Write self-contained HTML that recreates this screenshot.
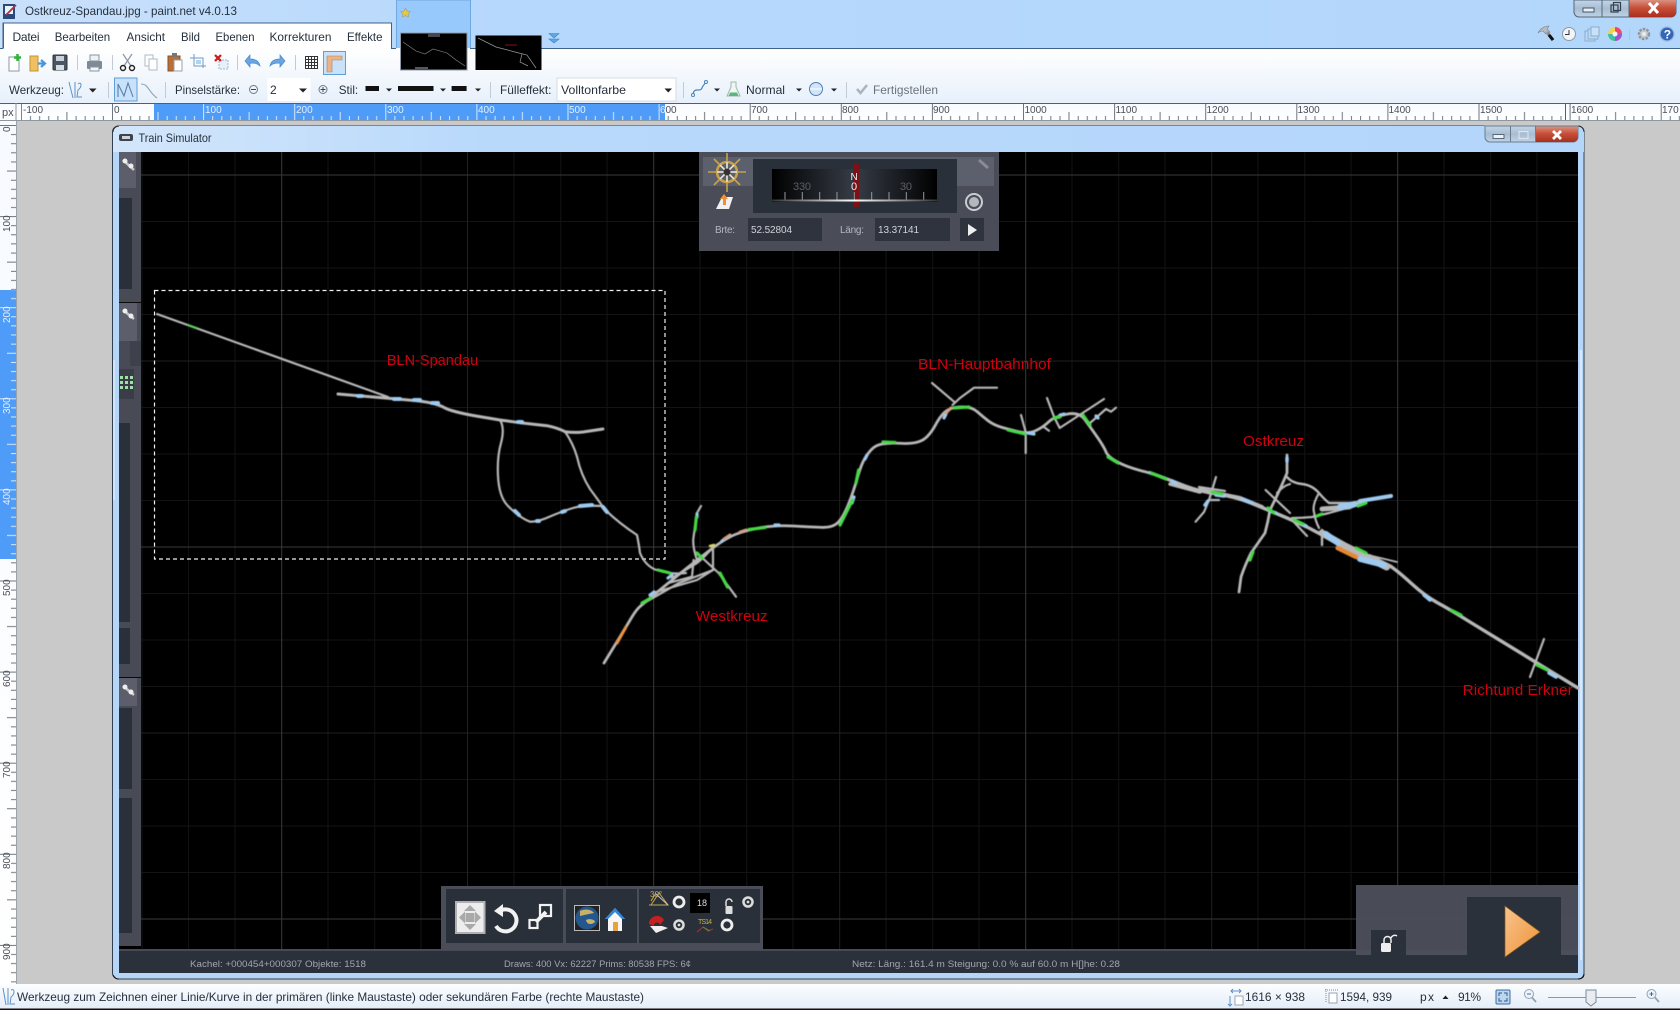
<!DOCTYPE html>
<html><head><meta charset="utf-8"><title>paint.net</title>
<style>
html,body{margin:0;padding:0;background:#c9c9c9;overflow:hidden}
svg{display:block;font-family:"Liberation Sans",Arial,sans-serif}
.t{font-size:12px;fill:#26303c}
.r{font-size:10px;fill:#4a4f57}
.w{font-size:10px;fill:#e4f0ff}
.g{font-size:9px;fill:#a2a5ac}
.lab{font-size:15px;fill:#d0000f}
</style></head><body>
<svg xmlns="http://www.w3.org/2000/svg" width="1680" height="1010" viewBox="0 0 1680 1010">
<defs>
<linearGradient id="sky" x1="0" x2="1" y1="0" y2="0"><stop offset="0" stop-color="#c9e0fb"/><stop offset=".3" stop-color="#b6d8fc"/><stop offset="1" stop-color="#b3d6fb"/></linearGradient>
<linearGradient id="tb" x1="0" x2="0" y1="0" y2="1"><stop offset="0" stop-color="#ffffff"/><stop offset="1" stop-color="#e7f0fb"/></linearGradient>
<linearGradient id="rul" x1="0" x2="0" y1="0" y2="1"><stop offset="0" stop-color="#f7faff"/><stop offset="1" stop-color="#ffffff"/></linearGradient>
<linearGradient id="wt" x1="0" x2="1" y1="0" y2="0"><stop offset="0" stop-color="#d3e6fb"/><stop offset=".25" stop-color="#b9d9fb"/><stop offset="1" stop-color="#b4d6fb"/></linearGradient>
<linearGradient id="red" x1="0" x2="0" y1="0" y2="1"><stop offset="0" stop-color="#d99080"/><stop offset=".45" stop-color="#c8503a"/><stop offset="1" stop-color="#a92e1e"/></linearGradient>
<linearGradient id="gb" x1="0" x2="0" y1="0" y2="1"><stop offset="0" stop-color="#c3d5e8"/><stop offset=".5" stop-color="#a9bdd2"/><stop offset="1" stop-color="#bfd2e6"/></linearGradient>
<linearGradient id="comp" x1="0" x2="1" y1="0" y2="0"><stop offset="0" stop-color="#000"/><stop offset=".5" stop-color="#363c46"/><stop offset="1" stop-color="#000"/></linearGradient>
<linearGradient id="glow" x1="0" x2="1" y1="0" y2="0"><stop offset="0" stop-color="#333"/><stop offset=".5" stop-color="#fff"/><stop offset="1" stop-color="#333"/></linearGradient>
<linearGradient id="tri" x1="0" x2="1" y1="0" y2="1"><stop offset="0" stop-color="#f8c48c"/><stop offset="1" stop-color="#ee9238"/></linearGradient>
<linearGradient id="st" x1="0" x2="0" y1="0" y2="1"><stop offset="0" stop-color="#fdfeff"/><stop offset="1" stop-color="#e4edf8"/></linearGradient>
<linearGradient id="hand" x1="0" x2="1" y1="0" y2="1"><stop offset="0" stop-color="#bbb"/><stop offset="1" stop-color="#111"/></linearGradient>
<pattern id="hr" patternUnits="userSpaceOnUse" x="112" y="103" width="91.1" height="17">
<path d="M.5 0V17M9.6 13V17M18.7 13V17M27.8 13V17M37 13V17M46 9V17M55.2 13V17M64.3 13V17M73.4 13V17M82.5 13V17" stroke="#6d7680" stroke-width="1" fill="none"/></pattern>
<pattern id="hw" patternUnits="userSpaceOnUse" x="112" y="103" width="91.1" height="17">
<path d="M.5 0V17M9.6 13V17M18.7 13V17M27.8 13V17M37 13V17M46 9V17M55.2 13V17M64.3 13V17M73.4 13V17M82.5 13V17" stroke="#d6e8ff" stroke-width="1" fill="none"/></pattern>
<pattern id="vr" patternUnits="userSpaceOnUse" x="0" y="125" width="17" height="91.1">
<path d="M0 .5H17M11 9.6H16M11 18.7H16M11 27.8H16M11 37H16M7 46H16M11 55.2H16M11 64.3H16M11 73.4H16M11 82.5H16" stroke="#6d7680" stroke-width="1" fill="none"/></pattern>
<pattern id="vw" patternUnits="userSpaceOnUse" x="0" y="125" width="17" height="91.1">
<path d="M0 .5H17M11 9.6H16M11 18.7H16M11 27.8H16M11 37H16M7 46H16M11 55.2H16M11 64.3H16M11 73.4H16M11 82.5H16" stroke="#d6e8ff" stroke-width="1" fill="none"/></pattern>
<filter id="soft" x="-2%" y="-2%" width="104%" height="104%"><feGaussianBlur stdDeviation=".5"/></filter>
<filter id="soft2"><feGaussianBlur stdDeviation=".3"/></filter>
</defs>

<rect width="1680" height="1010" fill="#c9c9c9"/>
<rect width="1680" height="48" fill="url(#sky)"/>
<rect x="3" y="4" width="12" height="15" fill="#2a4a7a"/><rect x="5" y="6" width="8" height="8" fill="#eef2f8"/><path d="M6 15L16 5" stroke="#b03040" stroke-width="1.800"/>
<text class="t" x="25" y="15" textLength="212" lengthAdjust="spacingAndGlyphs">Ostkreuz-Spandau.jpg - paint.net v4.0.13</text>

<path d="M1574 0H1676V12a5 5 0 0 1-5 5H1579a5 5 0 0 1-5-5Z" fill="url(#gb)" stroke="#56677c"/>
<path d="M1629 0H1676V12a5 5 0 0 1-5 5H1629Z" fill="url(#red)"/>
<path d="M1602 0V17M1629 0V17" stroke="#56677c"/>
<rect x="1583" y="8" width="11" height="4" fill="#e8eef5" stroke="#44566c"/>
<rect x="1611" y="5" width="7" height="7" fill="none" stroke="#33404f" stroke-width="1.200"/><rect x="1613.500" y="2.500" width="7" height="8" fill="none" stroke="#33404f" stroke-width="1.200"/>
<path d="M1649 3L1658 13M1658 3L1649 13" stroke="#fff" stroke-width="3"/>

<rect x="396.500" y="0" width="74" height="74" fill="#98c9fc" stroke="#6ea8e2"/>
<path d="M405.500 8L407 11L410.500 11.500L408 14L408.500 17L405.500 15.500L402.500 17L403 14L400.500 11.500L404 11Z" fill="#e3c84a" stroke="#a8903a" stroke-width=".5"/>

<rect x="0" y="48" width="1680" height="55" fill="url(#tb)"/>
<path d="M0 48.500H3V23H391.500V48.500H396M470 48.500H1680" stroke="#3f6288" fill="none"/>
<rect x="3.500" y="23.500" width="387.500" height="25" fill="#fff"/>
<path d="M3.500 48V23H391.500V48" stroke="#3f6288" fill="none"/>
<rect x="400.500" y="33" width="66.500" height="37" fill="#000" stroke="#8f9aa8"/>
<rect x="475.500" y="35.500" width="66" height="34.500" fill="#000"/>
<rect x="428" y="34" width="12" height="3" fill="#44464e"/>
<path d="M403 42L416 51L425 54L433 49L447 53L456 60L465 66" stroke="#8c8c8c" fill="none" stroke-width=".6"/>
<rect x="415" y="67" width="13" height="2" fill="#55575f"/>
<path d="M478 38L496 47L515 52L527 55L536 68M522 54L520 62L528 66" stroke="#999" fill="none" stroke-width=".7"/>
<path d="M505 45h12" stroke="#8a1020" stroke-width="1"/>
<path d="M549 33.500H559L554 38ZM549 39H559L554 43Z" fill="#5ba8ea" stroke="#3c80c0" stroke-width=".6"/>

<text class="t" x="12.500" y="41" textLength="27">Datei</text>
<text class="t" x="54.700" y="41" textLength="55.500" lengthAdjust="spacingAndGlyphs">Bearbeiten</text>
<text class="t" x="126.500" y="41" textLength="38.500" lengthAdjust="spacingAndGlyphs">Ansicht</text>
<text class="t" x="181" y="41" textLength="19" lengthAdjust="spacingAndGlyphs">Bild</text>
<text class="t" x="215.500" y="41" textLength="39" lengthAdjust="spacingAndGlyphs">Ebenen</text>
<text class="t" x="269.500" y="41" textLength="62" lengthAdjust="spacingAndGlyphs">Korrekturen</text>
<text class="t" x="347" y="41" textLength="35.500" lengthAdjust="spacingAndGlyphs">Effekte</text>

<path d="M9 57H19V71H9Z" fill="#fff" stroke="#8b98a8"/><path d="M17.500 54V61M14 57.500H21" stroke="#35b040" stroke-width="2.500"/>
<path d="M30 56H38V71H30Z" fill="#f0c060" stroke="#c49430"/><path d="M38 63.500H45M41 60L45 63.500L41 67" stroke="#4f94d8" stroke-width="2.200" fill="none"/>
<rect x="53" y="55" width="14" height="15" rx="1" fill="#4b5560" stroke="#2d343c"/><rect x="56" y="56" width="8" height="5" fill="#c9d2dc"/><rect x="56" y="65" width="8" height="5" fill="#d5dce4"/>
<path d="M77.500 55V70M112.500 55V70M237.500 55V70M295.500 55V70" stroke="#c3cad4"/>
<rect x="87" y="61" width="15" height="8" rx="1" fill="#7f8a96"/><rect x="90" y="55" width="9" height="6" fill="#eef1f5" stroke="#8a94a0"/><rect x="90" y="67" width="9" height="4" fill="#f3f5f8" stroke="#8a94a0"/>
<path d="M123 54L131 66M132 54L124 66" stroke="#8b96a2" stroke-width="1.200"/><circle cx="123" cy="68" r="2.500" fill="none" stroke="#222" stroke-width="1.400"/><circle cx="132" cy="68" r="2.500" fill="none" stroke="#222" stroke-width="1.400"/>
<rect x="145" y="55" width="8" height="11" fill="#fff" stroke="#b0bac6"/><rect x="149" y="59" width="8" height="11" fill="#fff" stroke="#b0bac6"/>
<rect x="168" y="56" width="12" height="15" fill="#b96f36" stroke="#8e5021"/><rect x="172" y="53" width="5" height="4" fill="#777"/><rect x="174" y="60" width="8" height="11" fill="#fff" stroke="#98a2ae"/>
<path d="M190 58H203V68M194 54V66H206" stroke="#6c9cc8" fill="none"/><rect x="196" y="60" width="5" height="4" fill="#b4d2ea"/>
<rect x="219" y="60" width="9" height="9" fill="#e6f0fa" stroke="#9cb6d0" stroke-dasharray="2 1"/><path d="M215 55L221 61M221 55L215 61" stroke="#d01818" stroke-width="2.200"/>
<path d="M260 66C259 60 254 59 250 59V55L245 61L250 67V63C254 63 257 63 260 66Z" fill="#6aa6e4" stroke="#4a88c6" stroke-width=".7"/>
<path d="M270 66C271 60 276 59 280 59V55L285 61L280 67V63C276 63 273 63 270 66Z" fill="#6aa6e4" stroke="#4a88c6" stroke-width=".7"/>
<path d="M305.500 56.500H317.500V68.500H305.500ZM305.500 59.500H317.500M305.500 62.500H317.500M305.500 65.500H317.500M308.500 56.500V68.500M311.500 56.500V68.500M314.500 56.500V68.500" fill="none" stroke="#333"/>
<rect x="323.500" y="51.500" width="22" height="23" fill="#c9e2fb" stroke="#5f9fd8"/>
<path d="M327 56H342V60H332V72H327Z" fill="#eab488" stroke="#b88050" stroke-width=".6"/>

<text class="t" x="9" y="94" textLength="55" lengthAdjust="spacingAndGlyphs">Werkzeug:</text>
<path d="M69 82L73 98M75 98V82M78 84C82 81 82 87 78 90L77 97H82" stroke="#5d93c8" fill="none" stroke-width="1"/>
<path d="M89 88.500H96.500L92.750 92.500Z" fill="#222"/>
<path d="M108.500 82V98M165.500 82V98M490.500 82V98M683.500 82V98M846.500 82V98" stroke="#c3cad4"/>
<rect x="114.500" y="78" width="22.500" height="23" fill="#c9e2fb" stroke="#5f9fd8"/>
<path d="M118 97V84L124 96L128 83L133 97" fill="none" stroke="#5a7fa8" stroke-width="1.100"/>
<path d="M141 84C149 84 148 92 157 98" fill="none" stroke="#8ea4ba" stroke-width="1.100"/>
<text class="t" x="175" y="94" textLength="65" lengthAdjust="spacingAndGlyphs">Pinselstärke:</text>
<circle cx="253.500" cy="89.500" r="4" fill="none" stroke="#6d7a88"/><path d="M251 89.500H256" stroke="#444"/>
<rect x="267.500" y="78" width="43" height="23" fill="#fff"/>
<text class="t" x="270" y="94">2</text>
<path d="M299 88.500H307L303 92.500Z" fill="#222"/>
<circle cx="323" cy="89.500" r="4" fill="none" stroke="#6d7a88"/><path d="M320.500 89.500H325.500M323 87V92" stroke="#444"/>
<text class="t" x="338.700" y="94" textLength="19.500" lengthAdjust="spacingAndGlyphs">Stil:</text>
<rect x="365.500" y="86" width="13.500" height="5" fill="#111"/><path d="M386 88.500H392L389 91.500Z" fill="#222"/>
<rect x="398" y="86" width="35.500" height="5" fill="#111"/><path d="M440 88.500H446L443 91.500Z" fill="#222"/>
<rect x="451.600" y="86" width="15" height="5" fill="#111"/><path d="M475 88.500H481L478 91.500Z" fill="#222"/>
<text class="t" x="500" y="94" textLength="51.500" lengthAdjust="spacingAndGlyphs">Fülleffekt:</text>
<rect x="557" y="78" width="119" height="23" fill="#fff" stroke="#d5dbe3"/>
<text class="t" x="561" y="94" textLength="65" lengthAdjust="spacingAndGlyphs">Volltonfarbe</text>
<path d="M664.500 88.500H672L668.250 92.500Z" fill="#222"/>
<path d="M693 95C694 86 700 93 702 88C703 85 705 84 706 82" fill="none" stroke="#4a83b8" stroke-width="1.200"/><circle cx="693" cy="95" r="1.500" fill="#fff" stroke="#4a83b8"/><circle cx="706" cy="82" r="1.500" fill="#fff" stroke="#4a83b8"/>
<path d="M714 88.500H720L717 91.500Z" fill="#222"/>
<path d="M731 82H736V87L740 96H727L731 87Z" fill="#f0f6f2" stroke="#a0b8aa"/><path d="M730 92.500H737L738.500 96H728.500Z" fill="#58b880"/>
<text class="t" x="746" y="94" textLength="39" lengthAdjust="spacingAndGlyphs">Normal</text>
<path d="M796 88.500H802L799 91.500Z" fill="#222"/>
<circle cx="816" cy="89" r="6.500" fill="#d3e4f6" stroke="#4a83b8"/><path d="M810 89h12" stroke="#fff"/>
<path d="M831 88.500H837L834 91.500Z" fill="#222"/>
<path d="M857 89L860.500 93L867 85" fill="none" stroke="#aeb3ba" stroke-width="2.500"/>
<text class="t" x="873" y="94" textLength="65" lengthAdjust="spacingAndGlyphs" style="fill:#6b727a">Fertigstellen</text>

<!-- top right tool icons -->
<path d="M1538 33C1540 29 1544 26 1549 26L1547 29L1550 32L1546 34L1543 31C1541 31 1539 32 1538 33Z" fill="#b6bcc4" stroke="#7a828c" stroke-width=".6"/><path d="M1546 31L1553 40" stroke="url(#hand)" stroke-width="3"/><path d="M1549 35L1553 40" stroke="#111" stroke-width="3"/>
<circle cx="1569" cy="34" r="6.500" fill="#f1f5f9" stroke="#8e9aa6"/><path d="M1569 30V34.500H1565" fill="none" stroke="#333"/>
<rect x="1585" y="31" width="10" height="10" fill="#bcd8f2" stroke="#88aed0"/><rect x="1588" y="29" width="10" height="10" fill="#bcd8f2" stroke="#88aed0"/><rect x="1591" y="27" width="8" height="9" fill="#c9e0f5" stroke="#88aed0"/>
<circle cx="1615" cy="34" r="7" fill="#f5d050"/><path d="M1615 27A7 7 0 0 1 1622 34H1615Z" fill="#e84a6a"/><path d="M1622 34A7 7 0 0 1 1615 41V34Z" fill="#a050d0"/><path d="M1615 41A7 7 0 0 1 1608 34H1615Z" fill="#40c0a0"/><circle cx="1615" cy="34" r="2.500" fill="#f2f2f2"/>
<path d="M1629.500 29V40" stroke="#b5c6d8"/>
<circle cx="1644" cy="34" r="5" fill="#c4c9ce" stroke="#8f96a0" stroke-width="2.500" stroke-dasharray="2.500 1.200"/><circle cx="1644" cy="34" r="2" fill="#e8ebee"/>
<circle cx="1667" cy="34" r="7" fill="#3366b8" stroke="#9bb8de" stroke-width="1.200"/><text x="1663.800" y="38.500" style="font-size:12px;font-weight:bold;fill:#fff">?</text>

<!-- horizontal ruler -->
<rect x="0" y="103" width="1680" height="17" fill="url(#rul)"/>
<rect x="21" y="103" width="1659" height="17" fill="url(#hr)"/>
<rect x="154" y="104" width="511" height="16" fill="#4e9cf8"/>
<rect x="155" y="104" width="510" height="16" fill="url(#hw)"/>
<path d="M0 103.500H1680" stroke="#3f6288"/><path d="M0 120.500H1680" stroke="#8f97a0"/>
<path d="M16 103V120" stroke="#8f97a0"/>
<text class="r" x="2" y="116" style="font-size:11px">px</text>
<text class="r" x="23" y="113">-100</text><text class="r" x="114" y="113">0</text>
<text class="w" x="205" y="113">100</text><text class="w" x="296" y="113">200</text><text class="w" x="387" y="113">300</text><text class="w" x="478" y="113">400</text><text class="w" x="569" y="113">500</text>
<text class="w" x="660" y="113">6</text><text class="r" x="665.500" y="113">00</text>
<text class="r" x="751" y="113">700</text><text class="r" x="842" y="113">800</text><text class="r" x="933" y="113">900</text><text class="r" x="1024.500" y="113">1000</text><text class="r" x="1115.500" y="113">1100</text><text class="r" x="1206.500" y="113">1200</text><text class="r" x="1297.500" y="113">1300</text><text class="r" x="1388.500" y="113">1400</text><text class="r" x="1480" y="113">1500</text><text class="r" x="1571" y="113">1600</text><text class="r" x="1662" y="113">170</text>
<path d="M1565.500 104V120" stroke="#3f6288"/>

<!-- vertical ruler -->
<rect x="0" y="121" width="16" height="863" fill="url(#rul)"/>
<rect x="0" y="121" width="16" height="863" fill="url(#vr)"/>
<rect x="0" y="290" width="16" height="269" fill="#4e9cf8"/>
<rect x="0" y="290" width="16" height="269" fill="url(#vw)"/>
<path d="M16.500 121V984" stroke="#9aa2ab"/>
<text class="r" transform="translate(10,132) rotate(-90)">0</text>
<text class="r" transform="translate(10,232) rotate(-90)">100</text>
<text class="w" transform="translate(10,323) rotate(-90)">200</text>
<text class="w" transform="translate(10,414) rotate(-90)">300</text>
<text class="w" transform="translate(10,505) rotate(-90)">400</text>
<text class="r" transform="translate(10,596) rotate(-90)">500</text>
<text class="r" transform="translate(10,687) rotate(-90)">600</text>
<text class="r" transform="translate(10,778) rotate(-90)">700</text>
<text class="r" transform="translate(10,869) rotate(-90)">800</text>
<text class="r" transform="translate(10,960) rotate(-90)">900</text>

<!-- train simulator window frame -->
<path d="M112.500 132a6 6 0 0 1 6-6H1578a6 6 0 0 1 6 6V973a6 6 0 0 1-6 6H118.500a6 6 0 0 1-6-6Z" fill="#b5d6f9" stroke="#30404f"/>
<path d="M113 152V131a5 5 0 0 1 5-5H1579a5 5 0 0 1 5 5V152Z" fill="url(#wt)"/>
<path d="M113 132a6 6 0 0 1 6-6" stroke="#222" fill="none"/><path d="M1578 126a6 6 0 0 1 6 6" stroke="#222" fill="none"/>
<rect x="119" y="134" width="14" height="7" rx="2" fill="#3c4450"/><rect x="122" y="136" width="8" height="3" fill="#cfd4da"/>
<text class="t" x="138.500" y="142" textLength="73" lengthAdjust="spacingAndGlyphs">Train Simulator</text>
<path d="M1485 126H1578V137a5 5 0 0 1-5 5H1490a5 5 0 0 1-5-5Z" fill="url(#gb)" stroke="#6c7c8e"/>
<path d="M1535 126.500H1578V137a5 5 0 0 1-5 5H1535Z" fill="url(#red)"/>
<path d="M1510.500 126V142M1535.500 126V142" stroke="#6c7c8e"/>
<rect x="1493" y="134.500" width="11" height="4" fill="#eef2f6" stroke="#55677a"/>
<rect x="1519" y="131.500" width="9" height="7" fill="none" stroke="#dfe6ee"/>
<path d="M1553 131L1561 139M1561 131L1553 139" stroke="#fff" stroke-width="2.800"/>
<path d="M114 360V500" stroke="#eaf4ff" stroke-width="1"/>
<path d="M1581 350V960" stroke="#d8e9fb" stroke-width="2"/>
<path d="M113 975c2 3 3 4 6 4" stroke="#111" fill="none"/><path d="M1584 974c0 3-2 5-6 5" stroke="#111" fill="none"/>

<!-- client -->
<rect x="119" y="152" width="1459" height="821" fill="#000"/>
<path d="M142 152V950M188.500 152V950M235 152V950M328 152V950M374.700 152V950M421 152V950M514 152V950M560.700 152V950M607 152V950M700 152V950M746.700 152V950M793 152V950M886 152V950M932.700 152V950M979 152V950M1072 152V950M1118.700 152V950M1165 152V950M1258 152V950M1304.700 152V950M1351 152V950M1444 152V950M1490.700 152V950M1537 152V950M119 221.500H1578M119 268H1578M119 314.500H1578M119 407.500H1578M119 454H1578M119 500.500H1578M119 593.500H1578M119 640H1578M119 686.500H1578M119 779.500H1578M119 826H1578M119 872.500H1578" stroke="#131313" fill="none"/>
<path d="M467.500 152V950M839.700 152V950M1211.700 152V950M119 361H1578M119 733H1578" stroke="#202020" fill="none"/>
<path d="M281.700 152V950M653.700 152V950M1025.700 152V950M1397.700 152V950M119 175H1578M119 547H1578M119 919H1578" stroke="#3a3a3a" fill="none"/>

<!-- left panels -->
<rect x="119" y="152" width="22" height="794" fill="#484a56"/>
<rect x="119" y="152" width="17" height="36" fill="#5c5e6b"/>
<rect x="119" y="198" width="13" height="91" fill="#2a303a"/>
<path d="M119 302.500H141" stroke="#0a0a0a"/>
<rect x="119" y="303" width="18" height="38" fill="#5c5e6b"/>
<rect x="130" y="341" width="11" height="25" fill="#3e404c"/>
<rect x="119" y="369" width="15" height="30" fill="#3a3c47"/>
<rect x="119" y="423" width="11" height="199" fill="#2a303a"/>
<rect x="119" y="628" width="11" height="36" fill="#2a303a"/>
<path d="M119 677.500H141" stroke="#0a0a0a"/>
<rect x="119" y="678" width="18" height="28" fill="#5c5e6b"/>
<rect x="119" y="708" width="13" height="81" fill="#2a303a"/>
<rect x="119" y="798" width="13" height="135" fill="#2a303a"/>
<g fill="#9fe0a4"><path d="M120 376h3v3h-3zM125 376h3v3h-3zM130 376h3v3h-3zM120 381h3v3h-3zM125 381h3v3h-3zM130 381h3v3h-3zM120 386h3v3h-3zM125 386h3v3h-3zM130 386h3v3h-3z"/></g>
<g stroke="#c8c8cc" stroke-width="2.500"><path d="M123 160L134 170"/><path d="M123 310L134 319"/><path d="M123 686L134 695"/></g>
<g fill="#eee"><circle cx="125" cy="161" r="2.500"/><circle cx="131" cy="166" r="2.500"/><circle cx="125" cy="311" r="2.500"/><circle cx="131" cy="316" r="2.500"/><circle cx="125" cy="687" r="2.500"/><circle cx="131" cy="692" r="2.500"/></g>

<!-- selection -->
<rect x="154.500" y="290.500" width="510.500" height="268.500" fill="none" stroke="#f0f0f0" stroke-width="1.200" stroke-dasharray="4 3"/>

<!-- tracks -->
<g filter="url(#soft)" fill="none" stroke-linecap="round" stroke-linejoin="round">
<g stroke="#b8b8b8" stroke-width="2.200">
<path d="M157 314L388 397"/>
<path stroke-width="3" d="M338 394L397 399L417 400.700Q437 403 445 408Q453 412 476 416L500 420L520 422.700L547 425.700Q558 428 565 431.700Q573 433 583 432L603 429"/>
<path d="M500 420Q505 428 501 443Q497 457 498 476Q499 497 508 506Q520 518 530 521.700Q538 522 550 516.500Q563 511 573 508Q583 505 602 506"/>
<path d="M565 431.700Q573 443 577 456.700Q581 475 590 489Q596 497 605 509.700Q620 524 637 535Q639 545 640 553Q645 565 655 569.500Q672 575 686 573"/>
<path stroke-width="2.800" d="M604 663L615 645Q626 627 631 618.500Q636 610 640 606.500Q644 603 658 591.500Q672 580 684.500 570Q697 560 711.500 549Q726 538 736.500 534Q747 530 761.500 527.500Q776 525 793.500 526Q811 527 822 527.400Q833 527.700 838.300 522.200Q843.600 516.700 848.800 503.400Q854 490 857.500 477.500Q861 465 864.500 459Q868 453 872 449Q876 445 883 443.900Q890 442.700 902.500 443.400Q915 444 922 440.400Q929 436.700 935.500 424.900Q942 413 948 409.900Q954 406.700 963 406.900Q972 407 977.500 411.900Q983 416.700 988.300 420.900Q993.600 425 1002.300 427.500Q1011 430 1020 432Q1029 434 1036.300 430.400Q1043.600 426.700 1048.800 421.700Q1054 416.700 1066.500 414.200Q1079 411.700 1084.500 419.200Q1090 426.700 1097 436.700Q1104 446.700 1106 451.900Q1108 457 1118.500 462.500Q1129 468 1150 473"/>
<path d="M644 603L679 583L713 570L713 547"/>
<path d="M656 592L697 580L713 570"/>
<path d="M697 560Q692 545 693.600 536.700L697 513L701 506"/>
<path d="M697 553L718.600 573L736 596.700"/>
<path d="M693.600 560L692 576.700L668.600 583"/>
<path d="M713 546.700Q706 556 697 563L672 578"/>
<path d="M932 383L954 401.700"/>
<path d="M997 387.700H974L960 398L952.500 405"/>
<path d="M1025.700 453L1025.700 432L1021 415"/>
<path d="M1047 398L1054 416.700L1059.700 428L1104 399"/>
<path d="M1090 423L1106 409L1111 411.700L1116 407.700"/>
<path d="M1043.600 426.700L1049 430.700"/>
<path stroke-width="3.400" d="M1150 472.700Q1170 480 1185 486Q1200.700 491.700 1217 494Q1234.500 496.700 1251 503Q1268 510 1280 515Q1292 520 1309 528Q1326 536.700 1343 547Q1359.600 556.700 1373 560Q1386.600 563 1393 568Q1400 573 1412 584Q1424 595 1437 602.500Q1451 610 1470 622L1578 688"/>
<path stroke-width="3.500" d="M1170 484L1200 492"/>
<path d="M1544 639L1530 677"/>
<path stroke-width="2.800" d="M1287 455L1287 473Q1280 490 1270 510Q1268 522 1265 533Q1258 543 1251 553Q1245 565 1241 577L1239 592"/>
<path stroke-width="2.400" d="M1287 477Q1292 483 1302 484Q1312 485 1319 493Q1325 500 1329 503L1353 503"/>
<path d="M1290 484Q1283 486 1277 493"/>
<path d="M1319 493Q1312 505 1314 512Q1315 520 1319 528"/>
<path d="M1292 518Q1302 518 1312 517L1329 513L1366 503"/>
<path d="M1265.600 490L1290 513M1292 520L1307 536"/>
<path d="M1216 477L1209 500L1204 512L1195.600 521.700M1199 487L1225 491M1209 500H1219"/>
<path stroke-width="7" d="M1322 533L1345 546L1386.600 567"/>
<path stroke-width="1.800" d="M1360 553L1397 562M1370 555L1392 566"/>
<path stroke-width="2.400" d="M1322 530L1322 545"/>
<path stroke-width="4" d="M1200 490L1240 498L1262 507"/>
<path stroke-width="5" d="M1322 509L1349 507L1360 502"/>
</g>
<g stroke="#9ecaf0" stroke-width="3.500">
<path stroke-width="4" d="M358 396H362M394 399H400M414 400H420M432 403H438M518 422H522M515 511L519 515M537 521H539M562 512L565 511M580 506L592 505M603 507L607 512"/>
<path stroke-width="3.200" d="M697 517V514M650 595L654 592M668 578L672 575M722 541L730 536M775 525H779M854 497L852 503M865 459L867 455M946 414L944 418M1028 433L1034 434M1060 415L1064 414M1150 473L1153 474M1098 418L1096 416"/>
<path d="M1172 481L1176 483M1216 495L1224 496M1242 499L1252 503M1270 511L1276 513M1300 523L1306 526"/>
<path stroke-width="6" d="M1326 534L1338 543M1360 559L1384 565"/>
<path stroke-width="6" d="M1340 507L1355 504"/><path stroke-width="4" d="M1360 501L1391 496"/>
<path d="M1424 595L1430 600M1549 673L1556 677M1287 458V461M1205 505L1208 501"/>
</g>
<g stroke="#d0a080" stroke-width="3"><path d="M724 539L730 535M740 532L746 530M946 413L951 408"/></g>
<g stroke="#44d844" stroke-width="3.200">
<path stroke-width="1.800" d="M188 325L197 328"/>
<path d="M749 529.500L765 527.500M658 570L670 573M642 603L651 598M696.400 517L695 530M697 553L702 558M720 573L727.500 587"/>
<path d="M883 442L895 442.500M858.600 470L856 483M852.500 500L840 525M1008 430L1025 434"/>
<path d="M954 408L969 407M1054 418L1060 417M1083 415L1090 425M1108 457L1118 463"/>
<path d="M1151 473L1166 479M1212 492L1222 494M1268 508L1274 513M1253 552L1250 560M1294 520L1303 524M1317 516L1322 514M1358 506L1366 503M1356 548L1366 553M1451 610L1461 615M1537 665L1547 670"/>
</g>
<path stroke="#e89440" stroke-width="3" d="M626 627L617 643"/>
<path stroke="#e48830" stroke-width="4.500" d="M1337.600 548L1356 557"/>
<path stroke="#d8d860" stroke-width="2.500" d="M710 546L714 545"/>
</g>

<!-- labels -->
<text class="lab" x="386.700" y="365" textLength="91.500" lengthAdjust="spacingAndGlyphs">BLN-Spandau</text>
<text class="lab" x="918" y="369" textLength="133" lengthAdjust="spacingAndGlyphs">BLN-Hauptbahnhof</text>
<text class="lab" x="695.700" y="621" textLength="72" lengthAdjust="spacingAndGlyphs">Westkreuz</text>
<text class="lab" x="1243" y="446" textLength="61" lengthAdjust="spacingAndGlyphs">Ostkreuz</text>
<text class="lab" x="1462.700" y="695" textLength="110" lengthAdjust="spacingAndGlyphs">Richtund Erkner</text>

<!-- compass panel -->
<rect x="699" y="152" width="300" height="99" fill="#4c4e5b" fill-opacity=".97"/>
<rect x="703" y="157" width="291" height="29" fill="#5d606e" fill-opacity=".95"/>
<rect x="753" y="159" width="204" height="54" fill="#2a303a"/>
<rect x="772" y="169" width="165" height="33" fill="url(#comp)"/>
<rect x="853" y="164" width="6" height="43" fill="#7a1216"/>
<path d="M785 192V200M802.300 192V200M819.700 192V200M837 192V200M854.300 192V200M871.700 192V200M889 192V200M906.300 192V200M923.700 192V200" stroke="#999"/>
<rect x="772" y="199.500" width="165" height="2" fill="url(#glow)"/>
<text x="850.500" y="180" style="font-size:10px;fill:#eee">N</text>
<text x="851" y="190" style="font-size:11px;fill:#eee">0</text>
<text x="793" y="190" style="font-size:11px;fill:#5c5e64" textLength="18">330</text>
<text x="900" y="190" style="font-size:11px;fill:#5c5e64" textLength="12">30</text>
<g filter="url(#soft2)">
<path d="M727 153V192M708 172H746M714 159L740 185M740 159L714 185" stroke="#c9a24a" stroke-width="1.600"/>
<circle cx="727" cy="172" r="10" fill="none" stroke="#c9a24a" stroke-width="2.500"/>
<path d="M720 165L734 179M734 165L720 179M727 162V182M717 172H737" stroke="#e6e6e6" stroke-width="1.500"/>
<circle cx="727" cy="172" r="3.500" fill="#333"/>
<path d="M716 209L722 197H733L729 209Z" fill="#f1f1f1"/>
<path d="M723 205V199H720L724 194L728 199H726V205Z" fill="#f09030"/>
</g>
<path d="M979 160L988 168" stroke="#8a8c94" stroke-width="3"/>
<circle cx="974" cy="202" r="8" fill="none" stroke="#c9ccd0" stroke-width="2"/><circle cx="974" cy="202" r="5" fill="#b4b8bd"/>
<rect x="748" y="218" width="74" height="23" fill="#2e333e"/>
<rect x="875" y="218" width="75" height="23" fill="#2e333e"/>
<rect x="960" y="218" width="24" height="23" fill="#2e333e"/>
<path d="M968 224L968 236L977 230Z" fill="#eee"/>
<text x="715" y="233" style="font-size:10px;fill:#b5b7bc" textLength="20">Brte:</text>
<text x="840" y="233" style="font-size:10px;fill:#b5b7bc" textLength="24">Läng:</text>
<text x="751" y="233" style="font-size:10px;fill:#d0d2d6" textLength="41">52.52804</text>
<text x="878" y="233" style="font-size:10px;fill:#d0d2d6" textLength="41">13.37141</text>

<!-- bottom bar -->
<rect x="119" y="950" width="1459" height="23" fill="#2b313b"/>
<path d="M119 950H1356" stroke="#474a56" stroke-width="2"/>
<text class="g" x="190" y="967" textLength="176" lengthAdjust="spacingAndGlyphs">Kachel: +000454+000307  Objekte: 1518</text>
<text class="g" x="504" y="967" textLength="187" lengthAdjust="spacingAndGlyphs">Draws: 400 Vx: 62227 Prims: 80538 FPS: 6¢</text>
<text class="g" x="852" y="967" textLength="268" lengthAdjust="spacingAndGlyphs">Netz:  Läng.:  161.4 m Steigung:  0.0 % auf 60.0 m H[]he:   0.28</text>

<!-- toolbar panel -->
<rect x="441" y="886" width="322" height="64" fill="#4a4c58"/>
<rect x="446" y="889" width="117" height="54" fill="#2a303a"/>
<rect x="566" y="889" width="71" height="54" fill="#2a303a"/>
<rect x="639" y="889" width="121" height="54" fill="#2a303a"/>
<rect x="456" y="902" width="28.500" height="31" fill="#ededed" stroke="#b0b0b0" stroke-width="2"/>
<path d="M470 905L476 911H464ZM470 930L476 924H464ZM459 917.500L465 911.500V923.500ZM481 917.500L475 911.500V923.500Z" fill="#a9a9a9"/><rect x="465.500" y="913" width="9" height="9" fill="#a9a9a9"/>
<path d="M499 911.500A11 11 0 1 1 496 926" fill="none" stroke="#f2f2f2" stroke-width="4"/><path d="M503 904V917L494 911Z" fill="#f2f2f2"/>
<rect x="540" y="905" width="11" height="11" fill="none" stroke="#f2f2f2" stroke-width="2.200"/><rect x="529.500" y="920" width="8" height="8" fill="none" stroke="#f2f2f2" stroke-width="2.200"/><path d="M536 922L546 912" stroke="#f2f2f2" stroke-width="4"/>
<rect x="574.500" y="905.500" width="25" height="25" fill="#222" stroke="#b9b9b9"/><circle cx="587" cy="918" r="11.500" fill="#24588c"/><path d="M580 911C586 908 592 910 594 913C589 914 584 915 580 916ZM586 920C590 918 595 920 595 922C592 925 587 925 586 920Z" fill="#c8b06a"/>
<path d="M605 919L615 908L625 919H622V931H608V919Z" fill="#f6f6f6"/><path d="M605 919L615 908L625 919H622L615 912L608 919Z" fill="#2d84d8"/><rect x="613" y="922" width="5" height="9" fill="#e8a040"/>
<path d="M651 901L656 893M649 905H668L659 893L651 905Z" fill="none" stroke="#c7a94a" stroke-width="1"/><path d="M656 894L668 905" stroke="#c7c7c7"/><text x="650" y="897" style="font-size:8px;fill:#c7a94a">30°</text>
<circle cx="679" cy="902" r="5" fill="none" stroke="#eee" stroke-width="2.800"/>
<rect x="690" y="893" width="20" height="20" fill="#000"/><text x="697" y="906" style="font-size:9px;fill:#ddd">18</text>
<rect x="725.500" y="906" width="7" height="8" rx="1" fill="#ddd"/><path d="M726 906V902a3 3 0 0 1 6 0" stroke="#ddd" fill="none" stroke-width="1.500"/>
<circle cx="748" cy="902" r="4.500" fill="#2a303a" stroke="#ddd" stroke-width="2.500"/><circle cx="748" cy="902" r="1.400" fill="#ddd"/>
<path d="M649 924A8 8 0 0 1 664 920L660 925A3 3 0 0 0 654 926Z" fill="#c42020"/><path d="M650 926H662L668 928L656 933Z" fill="#efefef"/>
<circle cx="679" cy="925" r="4.500" fill="#2a303a" stroke="#ddd" stroke-width="2.500"/><circle cx="679" cy="925" r="1.400" fill="#ddd"/>
<text x="698" y="924" style="font-size:7px;fill:#c7b040" textLength="14">TS14</text>
<path d="M697 932L703 927L708 931L713 929" fill="none" stroke="#b03030" stroke-width="1"/><path d="M703 927L710 931" stroke="#40a040"/>
<circle cx="727" cy="925" r="5" fill="none" stroke="#eee" stroke-width="2.800"/>

<!-- bottom right panel -->
<path d="M1356 885H1578V955H1356Z" fill="#4c4e5a" fill-opacity=".96"/>
<rect x="1356" y="950" width="222" height="5" fill="#4c4e5a"/>
<rect x="1356" y="955" width="222" height="18" fill="#2b313b"/>
<rect x="1467" y="897" width="94" height="58" fill="#2b313b"/>
<rect x="1371" y="930" width="35" height="25" fill="#2b313b"/>
<rect x="1381" y="943" width="10" height="9" rx="1.500" fill="#eee"/>
<path d="M1384 943V940a3.500 3.500 0 0 1 7 0V943M1391 938a4 4 0 0 1 6-2" stroke="#eee" fill="none" stroke-width="1.500"/>
<path d="M1505 906L1540 932L1505 957Z" fill="url(#tri)" stroke="#8a5a20" stroke-width=".7"/>

<!-- status bar -->
<rect x="0" y="984" width="1680" height="24.500" fill="url(#st)"/>
<rect x="0" y="1008.500" width="1680" height="1.500" fill="#111"/>
<path d="M3 988L6 1005M8 1005V988M11 990C15 988 15 994 11 997L10 1004H15" stroke="#5d93c8" fill="none"/>
<text class="t" x="17" y="1001" textLength="627" lengthAdjust="spacingAndGlyphs">Werkzeug zum Zeichnen einer Linie/Kurve in der primären (linke Maustaste) oder sekundären Farbe (rechte Maustaste)</text>
<path d="M1231 991H1241M1233 989L1231 991L1233 993M1239 989L1241 991L1239 993M1230 996V1006M1228 1004L1230 1006L1232 1004" stroke="#5d93c8" fill="none"/><rect x="1235" y="996" width="8" height="9" fill="#fff" stroke="#9aa5b2"/>
<text class="t" x="1245" y="1001" textLength="60" lengthAdjust="spacingAndGlyphs">1616 × 938</text>
<rect x="1329" y="993" width="8" height="10" fill="#fff" stroke="#9aa5b2"/><path d="M1325 990H1338M1326 989V1002" stroke="#5d93c8" stroke-dasharray="1 1"/>
<text class="t" x="1340" y="1001" textLength="52" lengthAdjust="spacingAndGlyphs">1594, 939</text>
<text class="t" x="1420" y="1001" textLength="14">px</text>
<path d="M1442.500 999L1445.500 995.500L1448.500 999Z" fill="#222"/>
<text class="t" x="1458" y="1001" textLength="23">91%</text>
<rect x="1496" y="990" width="14" height="14" rx="1" fill="#bcd6f0" stroke="#3b6ca0"/><path d="M1499 996V993H1502M1507 996V993H1504M1499 998V1001H1502M1507 998V1001H1504" stroke="#2b5c90" fill="none"/>
<circle cx="1529" cy="994" r="4.500" fill="#eef3f9" stroke="#93a2b2"/><path d="M1527 994h4" stroke="#3c6ea6"/><path d="M1532 997.500L1536 1002" stroke="#93a2b2" stroke-width="1.800"/>
<path d="M1548 997.500H1636" stroke="#8a97a5"/>
<path d="M1586 990H1596V1002L1591 1006L1586 1002Z" fill="#e8ecf1" stroke="#7d8a98"/>
<circle cx="1651.500" cy="994" r="4.500" fill="#eef3f9" stroke="#93a2b2"/><path d="M1649.500 994h4M1651.500 992v4" stroke="#3c6ea6"/><path d="M1655 997.500L1659 1002" stroke="#93a2b2" stroke-width="1.800"/>
</svg>
</body></html>
